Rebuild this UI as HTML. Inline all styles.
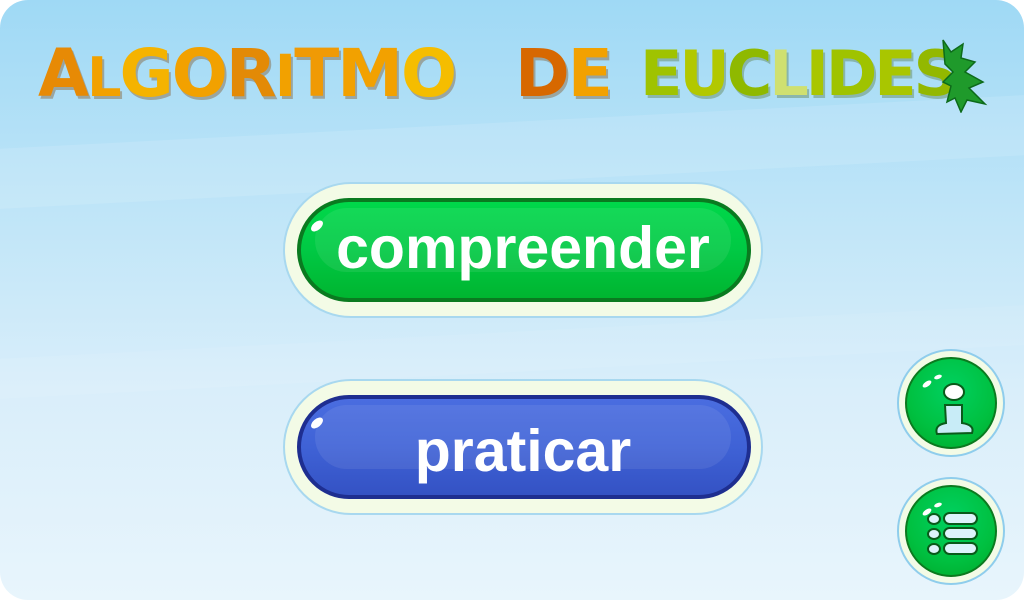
<!DOCTYPE html>
<html><head><meta charset="utf-8"><style>
html,body{margin:0;padding:0;background:#fff}
#s{position:relative;width:1024px;height:600px;overflow:hidden;border-radius:28px;
background:linear-gradient(180deg,#9fd9f5 0%,#bfe5f8 35%,#d9eefa 65%,#e8f5fc 100%);
font-family:"DejaVu Sans","Liberation Sans",sans-serif}
.band{position:absolute;left:-50px;width:1200px;background:rgba(255,255,255,.12);transform:rotate(-3deg)}
.t{position:absolute;top:38px;font-weight:bold;font-size:66px;letter-spacing:-2px;line-height:72px;text-shadow:2px 3px 0 rgba(120,60,0,.35)}
.t span{display:inline-block}
.pill{position:absolute;left:283px;width:480px;height:136px;border-radius:68px;background:#f3fbe6;border:2px solid #a8d8ef;box-sizing:border-box}
.pill .in{position:absolute;left:12px;top:14px;right:10px;bottom:14px;border-radius:54px;box-sizing:border-box}
.pill .lbl{position:absolute;left:0;right:0;top:24px;text-align:center;color:#fff;font-size:59px;font-family:"Liberation Sans",sans-serif;font-weight:bold;letter-spacing:0px}
.rb{position:absolute;left:897px;width:108px;height:108px;border-radius:50%;background:#f3fbe6;border:2px solid #8fcdec;box-sizing:border-box}
.rb .in{position:absolute;left:6px;top:6px;width:92px;height:92px;border-radius:50%;background:radial-gradient(circle at 50% 35%,#00d160 0%,#00c040 60%,#00a82a 100%);border:2px solid #0b7a1f;box-sizing:border-box}
</style></head><body><div id="s">
<div class="band" style="top:120px;height:60px"></div>
<div class="band" style="top:330px;height:40px;background:rgba(255,255,255,.08)"></div>
<div class="t" style="left:38px"><span style="color:#e78a05">A</span><span style="color:#f2a100;font-size:54px">L</span><span style="color:#f5b300">G</span><span style="color:#f2a100">O</span><span style="color:#e38a06">R</span><span style="color:#f2a100;font-size:58px">I</span><span style="color:#f09a05">T</span><span style="color:#f2a100">M</span><span style="color:#f5bd00">O</span></div>
<div class="t" style="left:515px"><span style="color:#d76800">D</span><span style="color:#f2a100">E</span></div>
<div class="t" style="left:640px;font-size:62px;letter-spacing:-3px;text-shadow:2px 3px 0 rgba(60,90,0,.3)"><span style="color:#9fc300">E</span><span style="color:#b2c800">U</span><span style="color:#8fb900">C</span><span style="color:#cfe070">L</span><span style="color:#a9c600">I</span><span style="color:#9fc300">D</span><span style="color:#a9c600">E</span><span style="color:#93b800">S</span></div>
<svg style="position:absolute;left:935px;top:38px" width="55" height="75" viewBox="0 0 55 75"><path d="M8 2 L16 14 L28 6 L26 20 L40 24 L30 34 L48 44 L34 50 L50 66 L32 62 L26 74 L20 60 L12 64 L16 48 L8 44 L18 34 L10 26 Z" fill="#1f9a2b" stroke="#0d6a1a" stroke-width="1.5"/></svg>
<div class="pill" style="top:182px"><div class="in" style="background:linear-gradient(180deg,#00d84a 0%,#00c944 50%,#00b530 100%);border:4px solid #0a7a20"></div>
<div style="position:absolute;left:30px;top:24px;width:416px;height:64px;border-radius:32px;background:rgba(255,255,255,.08)"></div>
<div style="position:absolute;left:25px;top:38px;width:14px;height:8px;border-radius:50%;background:#fff;transform:rotate(-40deg)"></div>
<div class="lbl" style="top:30px">compreender</div></div>
<div class="pill" style="top:379px"><div class="in" style="background:linear-gradient(180deg,#4a6de0 0%,#3f62d6 50%,#3452c4 100%);border:4px solid #1e2e90"></div>
<div style="position:absolute;left:30px;top:24px;width:416px;height:64px;border-radius:32px;background:rgba(255,255,255,.08)"></div>
<div style="position:absolute;left:25px;top:38px;width:14px;height:8px;border-radius:50%;background:#fff;transform:rotate(-40deg)"></div>
<div class="lbl" style="top:36px">praticar</div></div>
<div class="rb" style="top:349px"><div class="in"></div>
<svg style="position:absolute;left:0;top:0" width="108" height="108"><ellipse cx="28" cy="33" rx="5" ry="2.5" fill="#fff" transform="rotate(-35 28 33)"/><ellipse cx="39" cy="26" rx="4" ry="2" fill="#fff" transform="rotate(-20 39 26)"/><ellipse cx="55" cy="41" rx="10" ry="8" fill="#fff" stroke="#0a5a1a" stroke-width="2"/><path d="M46 54 L63 54 L63 72 Q76 74 73 82 L38 83 Q35 74 47 72 Z" fill="#c8ecf7" stroke="#0a5a1a" stroke-width="2"/></svg></div>
<div class="rb" style="top:477px"><div class="in"></div>
<svg style="position:absolute;left:0;top:0" width="108" height="108"><ellipse cx="28" cy="33" rx="5" ry="2.5" fill="#fff" transform="rotate(-35 28 33)"/><ellipse cx="39" cy="26" rx="4" ry="2" fill="#fff" transform="rotate(-20 39 26)"/>
<g fill="#ddf3fb" stroke="#0a5a1a" stroke-width="2"><ellipse cx="35" cy="40" rx="6" ry="5"/><ellipse cx="35" cy="55" rx="6" ry="5"/><ellipse cx="35" cy="70" rx="6" ry="5"/><rect x="45" y="34" width="33" height="11" rx="5.5"/><rect x="45" y="49" width="33" height="11" rx="5.5"/><rect x="45" y="64" width="33" height="11" rx="5.5"/></g></svg></div>
</div></body></html>
